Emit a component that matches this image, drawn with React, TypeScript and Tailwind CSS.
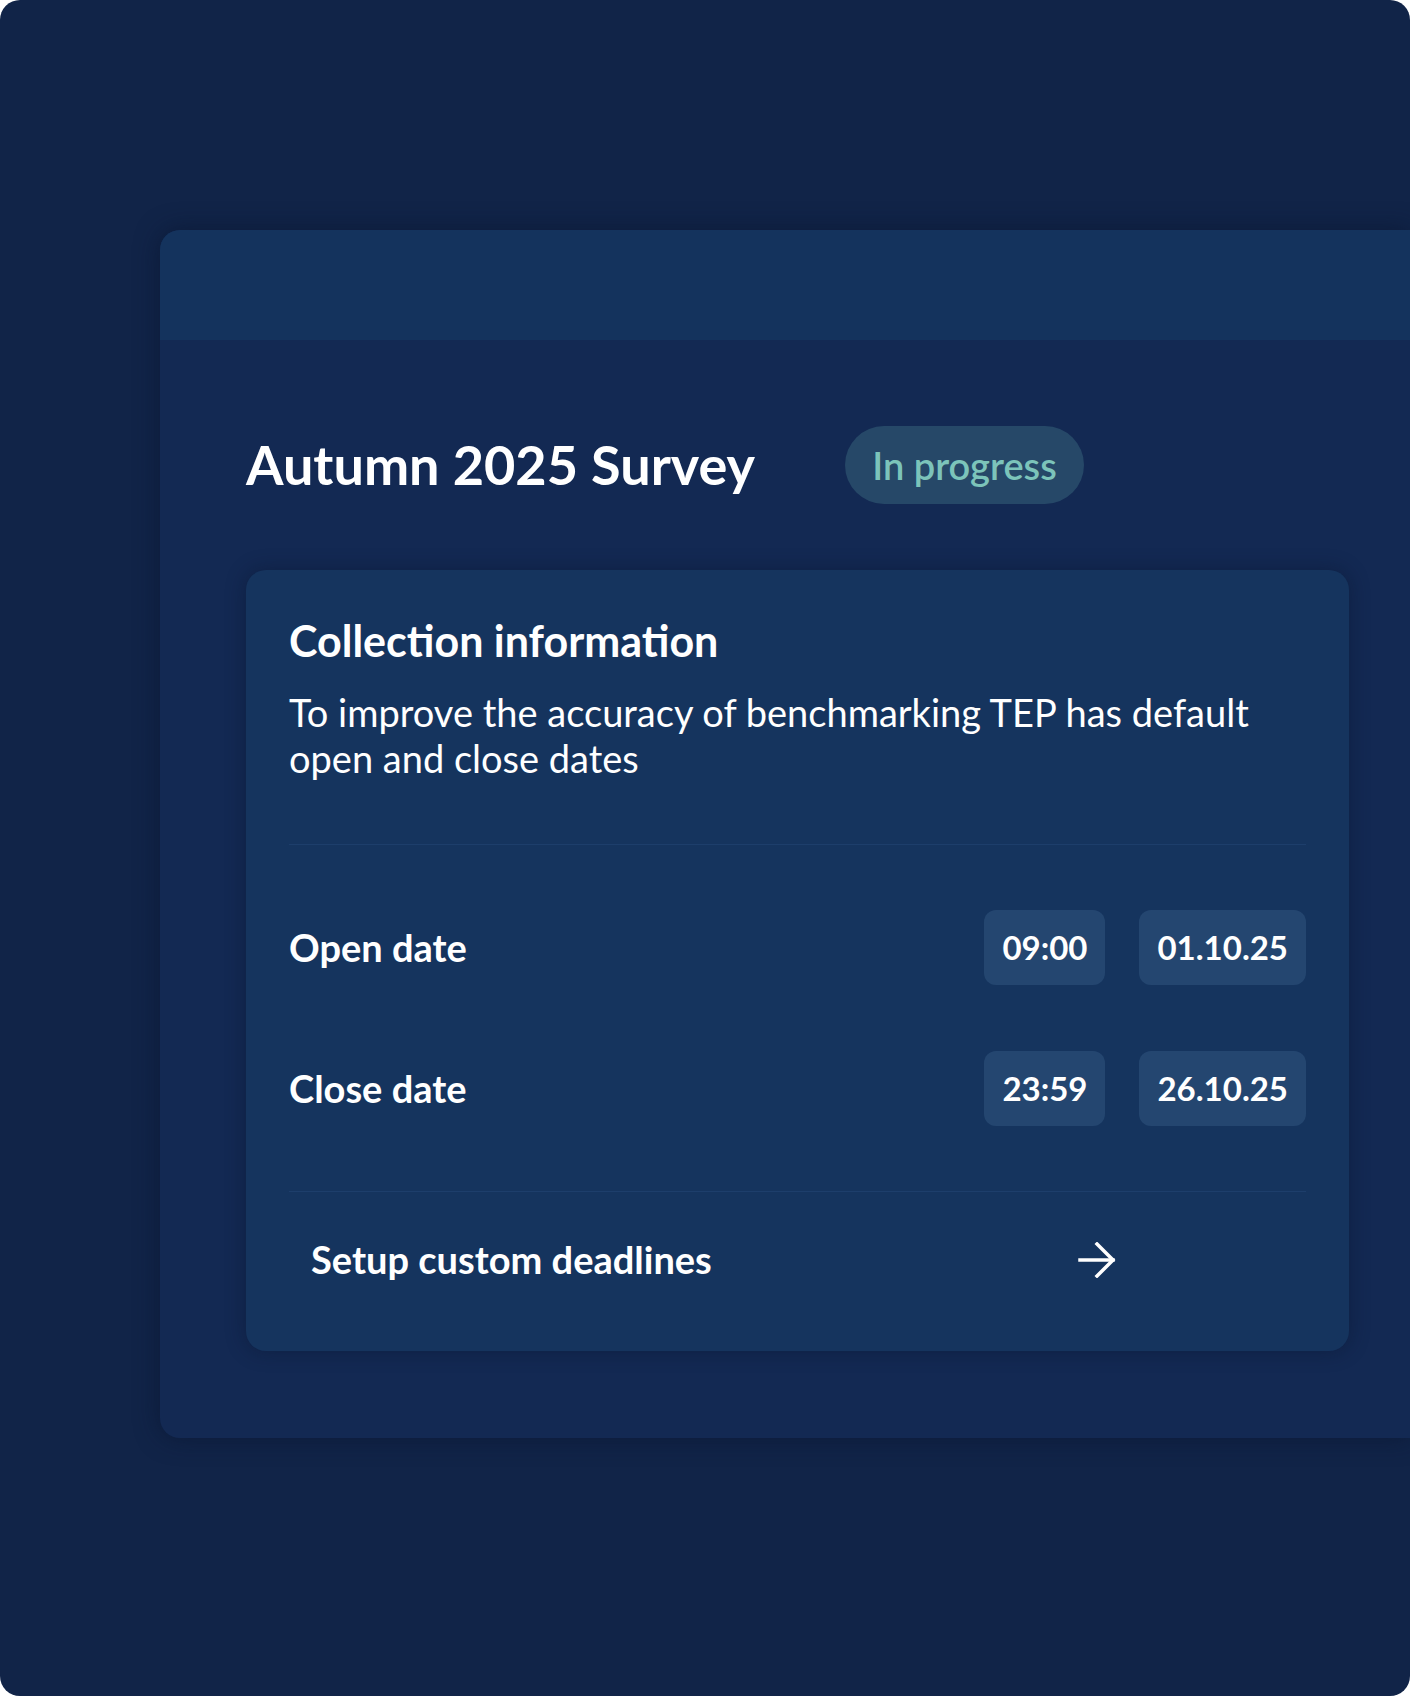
const rows = [
	{ label: "Open date", time: "09:00", date: "01.10.25" },
	{ label: "Close date", time: "23:59", date: "26.10.25" },
]

const ArrowIcon = () => (
	<svg width="38" height="36" viewBox="0 0 38 36" fill="none" stroke="white" strokeWidth="3.5" strokeLinecap="square">
		<path d="M2 18H35" />
		<path d="M19 2L35 18L19 34" />
	</svg>
)

const Chip = ({ children }: { children: string }) => (
	<div className="flex h-[75px] items-center rounded-[12px] bg-[#244670] px-[18px] text-[33px] font-bold text-white">
		{children}
	</div>
)

export default function App() {
	return (
		<div className="min-h-screen bg-white font-['Lato',sans-serif]">
			<div className="h-[1696px] w-[1410px] overflow-hidden rounded-[20px] bg-[#112448] pl-[160px] pt-[230px]">
				<div className="flex h-[1208px] flex-col overflow-hidden rounded-l-[20px] bg-[#132953] shadow-[0_0_24px_rgba(8,20,45,0.6)]">
					<div className="h-[110px] shrink-0 bg-[#14335d]" />
					<div className="flex flex-col pl-[86px] pt-[86px]">
						<div className="flex h-[78px] items-center gap-[90px]">
							<h1 className="text-[54px] leading-[64px] font-bold text-white">Autumn 2025 Survey</h1>
							<div className="flex h-[78px] w-[239px] items-center justify-center rounded-full bg-[#264868] text-[38px] font-semibold text-[#7cc4ba]">
								In progress
							</div>
						</div>

						<div className="mt-[66px] w-[1103px] rounded-[20px] bg-[#15345e] px-[43px] pt-[46px] shadow-[0_0_20px_rgba(8,20,45,0.45)]">
							<h2 className="text-[43px] leading-[50px] font-bold text-white">Collection information</h2>
							<p className="mt-[23px] text-[38px] leading-[46px] text-white">
								To improve the accuracy of benchmarking TEP has default open and close dates
							</p>

							<div className="mt-[63px] h-px bg-[#1d3e6b]" />

							<div className="flex flex-col gap-[66px] py-[65px]">
								{rows.map((row) => (
									<div key={row.label} className="flex h-[75px] items-center justify-between">
										<span className="text-[38px] font-bold text-white">{row.label}</span>
										<div className="flex gap-[34px]">
											<Chip>{row.time}</Chip>
											<Chip>{row.date}</Chip>
										</div>
									</div>
								))}
							</div>

							<div className="h-px bg-[#1d3e6b]" />

							<div className="flex w-[827px] items-center justify-between pt-[46px] pb-[70px] pl-[22px]">
								<span className="text-[38px] leading-[43px] font-bold text-white">Setup custom deadlines</span>
								<ArrowIcon />
							</div>
						</div>
					</div>
				</div>
			</div>
		</div>
	)
}
